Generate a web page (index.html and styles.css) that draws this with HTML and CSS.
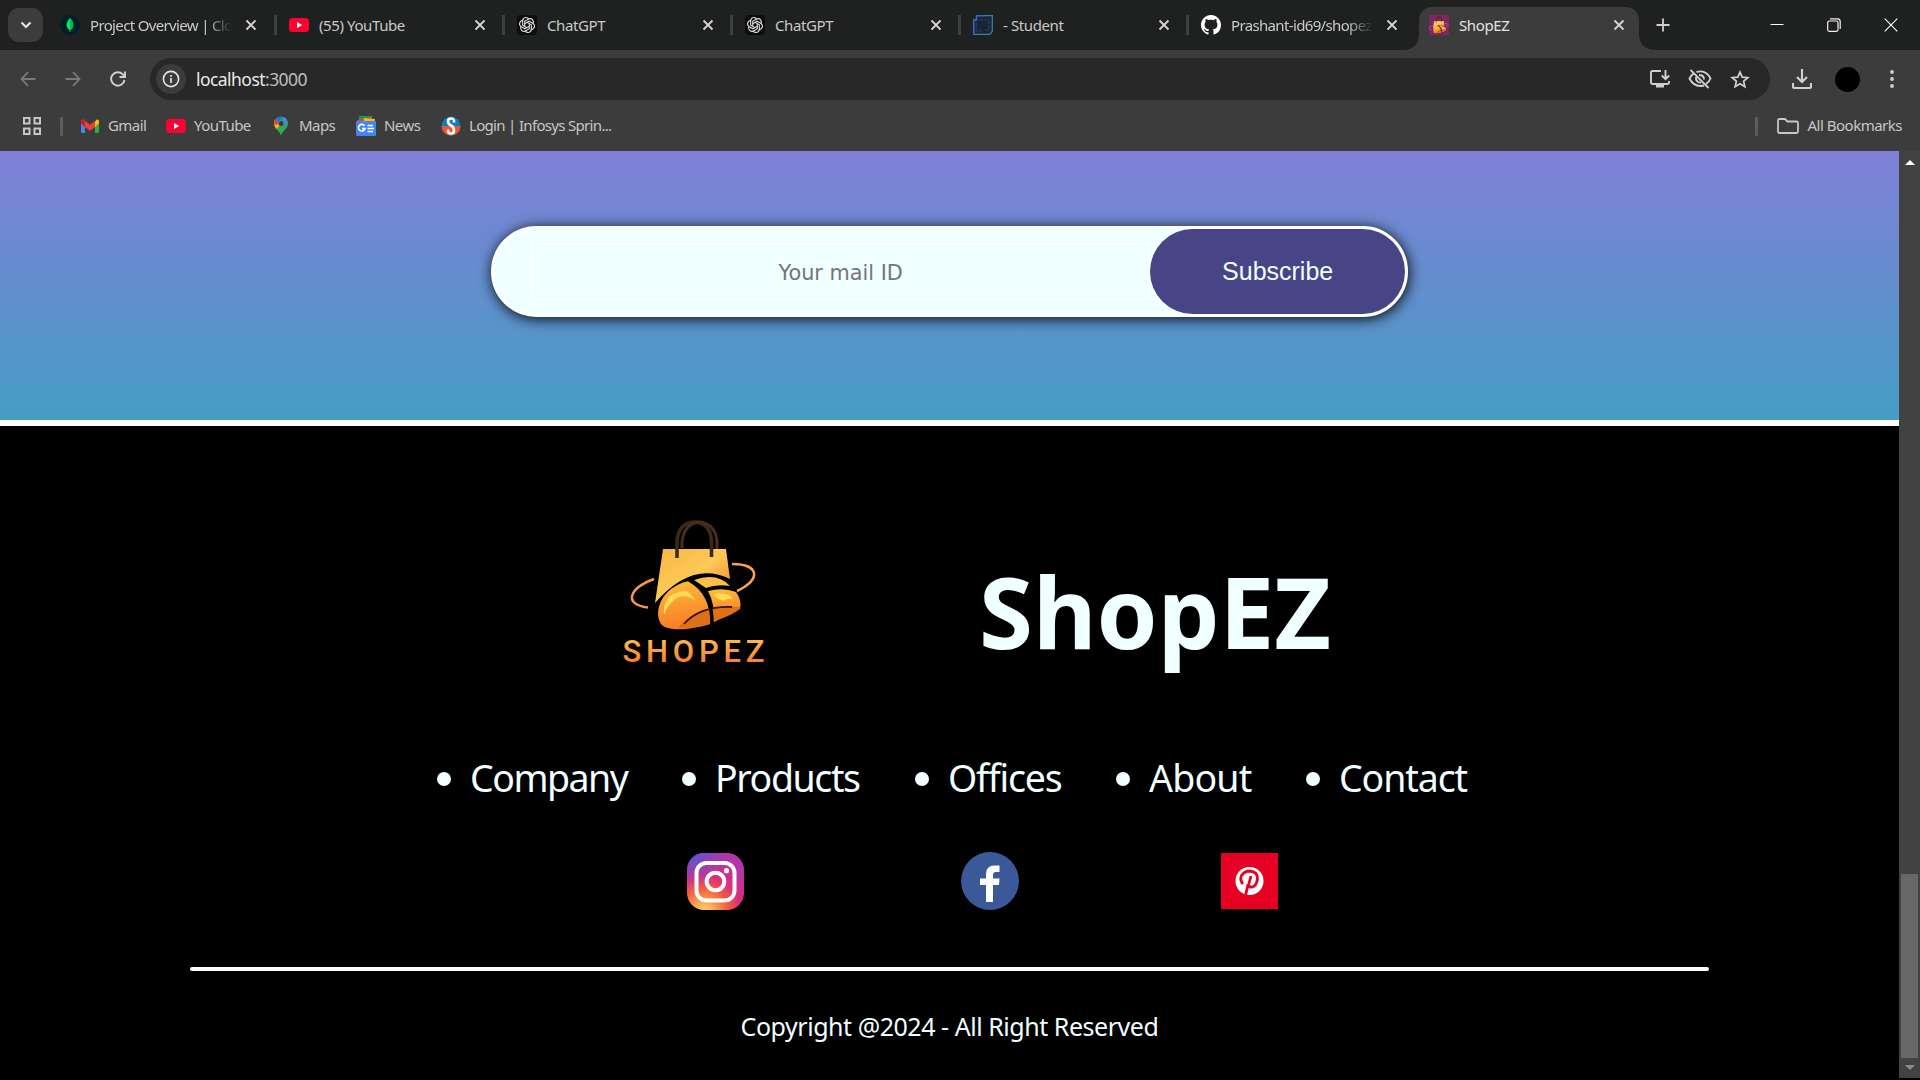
FILE: index.html
```html
<!DOCTYPE html>
<html lang="en">
<head>
<meta charset="utf-8">
<title>ShopEZ</title>
<link rel="stylesheet" href="styles.css">
</head>
<body>
<svg width="0" height="0" class="defs">
  <defs>
    <linearGradient id="gBag" x1="0" y1="0" x2="1" y2="1"><stop offset="0" stop-color="#f9b640"/><stop offset=".5" stop-color="#fdc957"/><stop offset="1" stop-color="#f47a25"/></linearGradient>
    <linearGradient id="gMouse" x1=".3" y1="0" x2=".5" y2="1"><stop offset="0" stop-color="#fdbb3c"/><stop offset="1" stop-color="#f87a24"/></linearGradient>
    <linearGradient id="gWord" x1="0" y1="0" x2="0" y2="1"><stop offset=".15" stop-color="#fbbb50"/><stop offset=".85" stop-color="#f57a35"/></linearGradient>
    <radialGradient id="gInsta" cx=".3" cy="1.05" r="1"><stop offset="0" stop-color="#fdd575"/><stop offset=".15" stop-color="#fcb45a"/><stop offset=".42" stop-color="#f5603c"/><stop offset=".65" stop-color="#d92e7f"/><stop offset="1" stop-color="#b136a8"/></radialGradient>
    <radialGradient id="gInstaBlue" cx=".1" cy="0" r=".6"><stop offset="0" stop-color="#4a5fd8"/><stop offset="1" stop-color="#7a48c8" stop-opacity="0"/></radialGradient>
    <symbol id="x" viewBox="0 0 12 12"><path d="M1.5 1.5l9 9m0-9l-9 9" stroke="currentColor" stroke-width="1.8" fill="none"/></symbol>
    <symbol id="yt" viewBox="0 0 20 20"><rect y="3" width="20" height="14" rx="3.5" fill="#ff0033"/><path d="M8 7l5.200 3L8 13z" fill="#fff"/></symbol>
    <symbol id="gpt" viewBox="0 0 20 20"><rect width="20" height="20" rx="4" fill="#0c0c0c"/><g fill="none" stroke="#d8d8d8" stroke-width="1.150"><path id="petal" d="M7.700 11.300V6.300L11.500 4.100C15 2.500 17.500 6 15.900 9"/><use href="#petal" transform="rotate(60 10 10)"/><use href="#petal" transform="rotate(120 10 10)"/><use href="#petal" transform="rotate(180 10 10)"/><use href="#petal" transform="rotate(240 10 10)"/><use href="#petal" transform="rotate(300 10 10)"/></g></symbol>
    <symbol id="bag" viewBox="0 0 200 180">
      <path d="M63 49H126L130 79Q92 60 55 103Z" fill="url(#gBag)"/>
      <g fill="none" stroke="#3d2815" stroke-width="3.600"><path d="M77 58V42Q78 22 96 22 111 24 111.500 42V57"/><path d="M82 48V42Q84 24 99 22 116 24 117 42V49" stroke="#4a2b20" stroke-width="3"/></g>
      <path d="M54 79C30 88 22 104 48 107.500" fill="none" stroke="#f59a48" stroke-width="2.500"/>
      <path d="M132 64C159 64 162 79 137 91" fill="none" stroke="#f9a44c" stroke-width="2.500"/>
      <path d="M89 81C61 87 53 112 61 124 67 132 91 130 110 124 111 106 105 91 89 81Z" fill="url(#gMouse)"/>
      <path d="M64 115Q62 92 86 91 92 94 96 101 84 92 74 100 66 107 64 115Z" fill="#fedb52"/>
      <path d="M94 80Q117 72 130 86 116 84 106 88Z" fill="#fbc04b"/>
      <path d="M108 91Q123 87 136 92 142 100 140 109L114 122Q115 104 108 91Z" fill="url(#gMouse)"/>
      <path d="M113 94Q128 91 133 99 126 98 124 101 118 100 113 94Z" fill="#fedb52"/>
      <path d="M78 128Q97 103 140 107 139 113 114 121L110 124Q92 129 78 128Z" fill="#e07016"/>
      <path d="M84 124Q100 106 132 107" fill="none" stroke="#351206" stroke-width="1.800"/>
      <path d="M89 80Q113 93 112 125" fill="none" stroke="#000" stroke-width="3.500"/>
    </symbol>
  </defs>
</svg>

<header class="chrome">
  <div class="tabstrip">
    <button class="tab-search"><svg width="12" height="8" viewBox="0 0 12 8"><path d="M1.500 1.500L6 6l4.500-4.500" fill="none" stroke="#e3e3e3" stroke-width="2.200"/></svg></button>
    <div class="tab first"><svg class="fav" viewBox="0 0 20 20"><circle cx="10" cy="10" r="10" fill="#001e2b"/><path d="M10 3Q5.800 8 6.800 11.500 7.700 14 9.600 15V17h.8V15Q12.700 14 13.300 11 13.700 7 10 3Z" fill="#00ed64"/><path d="M10 3V15Q12.700 14 13.300 11 13.700 7 10 3Z" fill="#00b653"/></svg><span class="title fade">Project Overview | Clo</span><svg class="close"><use href="#x"/></svg></div>
    <div class="tab"><svg class="fav"><use href="#yt"/></svg><span class="title">(55) YouTube</span><svg class="close"><use href="#x"/></svg></div>
    <div class="tab"><svg class="fav"><use href="#gpt"/></svg><span class="title">ChatGPT</span><svg class="close"><use href="#x"/></svg></div>
    <div class="tab"><svg class="fav"><use href="#gpt"/></svg><span class="title">ChatGPT</span><svg class="close"><use href="#x"/></svg></div>
    <div class="tab"><svg class="fav" viewBox="0 0 20 20"><path d="M3.500 .7H19.300V16L17 19.300H.7V5H3.500Z" fill="#17243a" stroke="#3a8297" stroke-width="1.300"/><path d="M.7 19V5H3.500V.7H11" fill="none" stroke="#3c63bd" stroke-width="1.300"/><path d="M6 5h10v10h-4M3.500 8v8h7" fill="none" stroke="#23375a" stroke-width="1.600" stroke-dasharray="4 1"/></svg><span class="title">- Student</span><svg class="close"><use href="#x"/></svg></div>
    <div class="tab"><svg class="fav" viewBox="0 0 16 16"><path fill="#fff" d="M8 0C3.580 0 0 3.580 0 8c0 3.540 2.290 6.530 5.470 7.590.4.070.55-.17.55-.38 0-.19-.01-.82-.01-1.490-2.010.37-2.530-.49-2.690-.94-.09-.23-.48-.94-.82-1.130-.28-.15-.68-.52-.01-.53.63-.01 1.080.58 1.230.82.72 1.210 1.870.87 2.330.66.070-.52.28-.87.51-1.070-1.780-.2-3.640-.89-3.640-3.950 0-.87.31-1.590.82-2.150-.08-.2-.36-1.020.08-2.120 0 0 .67-.21 2.200.82.64-.18 1.320-.27 2-.27s1.360.09 2 .27c1.530-1.040 2.200-.82 2.200-.82.44 1.100.16 1.920.08 2.120.51.56.82 1.270.82 2.150 0 3.070-1.870 3.750-3.650 3.950.29.25.54.73.54 1.480 0 1.070-.01 1.930-.01 2.200 0 .21.15.46.55.38A8 8 0 0 0 16 8c0-4.420-3.580-8-8-8Z"/></svg><span class="title fade">Prashant-id69/shopez</span><svg class="close"><use href="#x"/></svg></div>
    <div class="tab active"><svg class="fav shopfav" viewBox="30 18 130 115"><use href="#bag" width="200" height="180"/></svg><span class="title">ShopEZ</span><svg class="close"><use href="#x"/></svg></div>
    <svg class="newtab" width="14" height="14" viewBox="0 0 14 14"><path d="M7 .5v13M.5 7h13" stroke="#d0d0d0" stroke-width="1.800"/></svg>
    <div class="winbtns">
      <svg width="14" height="14" viewBox="0 0 14 14"><path d="M.5 6.500h13" stroke="#fff"/></svg>
      <svg width="14" height="14" viewBox="0 0 14 14" fill="none" stroke="#f0f0f0" stroke-width="1.200"><rect x=".7" y="3" width="10.300" height="10.300" rx="1.500"/><path d="M3 .8h7.500q2.700 0 2.700 2.700V11"/></svg>
      <svg width="14" height="14" viewBox="0 0 14 14"><path d="M.7 .7l12.600 12.600m0-12.600L.7 13.300" stroke="#fff" stroke-width="1.100"/></svg>
    </div>
  </div>

  <div class="toolbar">
    <nav class="navbtns">
      <svg width="16" height="16" viewBox="0 0 16 16" fill="none" stroke="#797979" stroke-width="1.800"><path d="M15.500 8H2M8 1.200L1.500 8 8 14.800"/></svg>
      <svg width="16" height="16" viewBox="0 0 16 16" fill="none" stroke="#797979" stroke-width="1.800"><path d="M.5 8H14M8 1.200L14.500 8 8 14.800"/></svg>
      <svg width="16" height="16" viewBox="0 0 16 16" fill="none" stroke="#d0d0d0" stroke-width="1.900"><path d="M14.500 9A6.700 6.700 0 1 1 12.800 3.400L14.800 5.600M15 .5V6H9.500"/></svg>
    </nav>
    <div class="omnibox">
      <span class="info"><svg width="18" height="18" viewBox="0 0 18 18"><circle cx="9" cy="9" r="7.600" fill="none" stroke="#e3e3e3" stroke-width="1.600"/><path d="M9 8v5M9 5v1.800" stroke="#e3e3e3" stroke-width="1.700"/></svg></span>
      <span class="url">localhost<i>:3000</i></span>
      <svg class="o1" width="20" height="18" viewBox="0 0 20 18" fill="none" stroke="#d0d0d0" stroke-width="1.900"><path d="M11 1H2.500Q1 1 1 2.500V12.500Q1 14 2.500 14H17.500Q19 14 19 12.500V11M15.500 0V9M11.800 5.500l3.700 3.700 3.700-3.700"/><path d="M6 16h8" stroke-width="3"/></svg>
      <svg class="o2" width="24" height="20" viewBox="0 0 24 20" fill="none" stroke="#d0d0d0" stroke-width="1.900"><path d="M8.500 3Q18 .2 22.500 9.500 21 13 18 15M5.500 4.500Q3 6.500 1.500 9.500 6.500 19 16 16.500"/><path d="M11 6q5 0 5 4.500M8 8q-.5 5.500 5 5.800"/><path d="M2.500 .8L20.500 19"/></svg>
      <svg class="o3" width="20" height="19" viewBox="0 0 20 19" fill="none" stroke="#d0d0d0" stroke-width="1.700"><path d="M10 2.200L12.200 7.100 17.800 7.600 13.600 11.300 14.900 16.700 10 13.800 5.100 16.700 6.400 11.300 2.200 7.600 7.800 7.100Z"/></svg>
    </div>
    <svg class="dl" width="20" height="20" viewBox="0 0 20 20" fill="none" stroke="#d0d0d0" stroke-width="2.100"><path d="M10 0V13M5 8l5 5 5-5M1 14V17.500Q1 19 2.500 19H17.500Q19 19 19 17.500V14"/></svg>
    <span class="avatar"></span>
    <svg class="more" width="4" height="18" viewBox="0 0 4 18" fill="#d0d0d0"><circle cx="2" cy="2" r="1.900"/><circle cx="2" cy="9" r="1.900"/><circle cx="2" cy="16" r="1.900"/></svg>
  </div>

  <div class="bookmarks">
    <svg class="apps" width="18" height="18" viewBox="0 0 18 18" fill="none" stroke="#c7c7c7" stroke-width="2"><path d="M1 1h5.500v5.500H1zM11.500 1H17v5.500h-5.500zM1 11.500h5.500V17H1zM11.500 11.500H17V17h-5.500z"/></svg>
    <span class="sep"></span>
    <span class="bm gmail"><svg width="20" height="20" viewBox="0 0 20 20"><path d="M1 5v10.500q0 1.500 1.500 1.500H5V8z" fill="#4285f4"/><path d="M19 5v10.500q0 1.500-1.500 1.500H15V8z" fill="#34a853"/><path d="M15 5.500l1.500-1.700Q19 3 19 5.500V7.500L15 11z" fill="#fbbc04"/><path d="M1 7.500V5.500Q1 3 3.500 3.500L10 8.700 15 5v6l-5 3.800L5 11z" fill="#ea4335"/><path d="M1 7.500V5.500Q1 3 3.500 3.500L5 5v6z" fill="#c5221f"/></svg>Gmail</span>
    <span class="bm youtube"><svg width="20" height="20"><use href="#yt"/></svg>YouTube</span>
    <span class="bm maps"><svg width="20" height="20" viewBox="0 0 20 20"><path d="M10 .5a7 7 0 0 1 6.500 9.500C15.500 13 11.500 15 10 19.500 8.500 15 3 12 3 7.500A7 7 0 0 1 10 .5Z" fill="#34a853"/><path d="M3 7q.2 3.500 2.500 6l6-7L5 3Q3 5 3 7Z" fill="#fbbc04"/><path d="M4.700 3L8 6 5.500 9.200 3 7.500Q3 5 4.700 3Z" fill="#ea4335"/><path d="M4.700 3A7 7 0 0 1 12.500 1L7.500 6.200z" fill="#1a73e8"/><path d="M12.500 1q3.500 1.500 4.300 5L11 10.500 9 8 13 3Z" fill="#4285f4"/><circle cx="10" cy="7.500" r="2.500" fill="#3c3c3c"/></svg>Maps</span>
    <span class="bm news"><svg width="20" height="20" viewBox="0 0 20 20"><path d="M3 0h13v6H3z" fill="#0c9d58"/><path d="M1 4l14-3 2 6H2z" fill="#ea4335"/><path d="M8 2l11 1-1 5H8z" fill="#fbbc04"/><rect y="5" width="20" height="15" rx="1" fill="#4285f4"/><path d="M8.500 9.800A3.300 3.300 0 1 0 9 12.500H6M11.500 9.500H17M11.500 12.500H18M11.500 15.500H17" fill="none" stroke="#fff" stroke-width="1.600"/></svg>News</span>
    <span class="bm login"><svg width="20" height="20" viewBox="0 0 20 20"><circle cx="10" cy="10" r="9.500" fill="#0b7ec4"/><path d="M.5 10a9.500 9.500 0 0 0 19 0z" fill="#f0542a"/><path d="M13 6.500V5Q13 2.500 10 2.500 7 2.500 7 5.500 7 8 10 9.500 13 11 13 14.500 13 17.500 10 17.500 7 17.500 7 15V13.500" fill="none" stroke="#fff" stroke-width="2.600"/></svg>Login | Infosys Sprin...</span>
    <span class="bm all"><span class="sep"></span><svg width="22" height="16" viewBox="0 0 22 16"><path d="M1 13.500V2.500Q1 1 2.500 1H8l2.500 2.500h9Q21 3.500 21 5v8.500q0 1.500-1.500 1.500h-17Q1 15 1 13.500z" fill="none" stroke="#c7c7c7" stroke-width="1.800"/></svg>All Bookmarks</span>
  </div>
</header>

<div class="viewport">
  <main class="page">
    <section class="newsletter">
      <form class="mailbox">
        <input class="mail" type="text" placeholder="Your mail ID">
        <button class="subscribe" type="button">Subscribe</button>
      </form>
    </section>
    <footer class="footer">
      <div class="brand">
        <svg class="logo" width="200" height="180" viewBox="0 0 200 180"><use href="#bag" width="200" height="180"/><text x="22.500" y="162" textLength="142" font-family="Roboto, sans-serif" font-size="31" font-weight="500" fill="url(#gWord)">SHOPEZ</text></svg>
        <h1 class="name"><svg width="364" height="140"><text x="0" y="112" textLength="352" lengthAdjust="spacingAndGlyphs">ShopEZ</text></svg></h1>
      </div>
      <ul class="links">
        <li><span class="w1">Company</span></li><li><span class="w2">Products</span></li><li><span class="w3">Offices</span></li><li><span class="w4">About</span></li><li><span class="w5">Contact</span></li>
      </ul>
      <div class="social">
        <svg width="57" height="57" viewBox="0 0 57 57"><rect width="57" height="57" rx="17" fill="url(#gInsta)"/><rect width="57" height="57" rx="17" fill="url(#gInstaBlue)"/><g fill="none" stroke="#fff" stroke-width="4"><rect x="9.500" y="10" width="38" height="37.500" rx="10"/><circle cx="28.500" cy="28.500" r="8.800"/></g><circle cx="39.500" cy="17.700" r="2.600" fill="#fff"/></svg>
        <svg width="58" height="58" viewBox="0 0 58 58"><circle cx="29" cy="29" r="29" fill="#3b5998"/><path d="M25 50V33H19V26.500h6V22q0-8.500 8.500-8.500H38.500V20H35q-3 0-3 3.200v3.300h6.500L38 33H32v17z" fill="#fff"/></svg>
        <svg width="57" height="56" viewBox="0 0 57 56"><path d="M0 0h57v56H0z" fill="#e60023"/><circle cx="28.500" cy="28" r="14" fill="#fff"/><path d="M22 31Q18.500 27 20.500 22.500 23.500 18 29 18 37 19 36.500 26 35 34.500 30 34 27.500 34 27 31.500L24.500 42.500" fill="none" stroke="#e60023" stroke-width="2.800"/><path d="M30 23L27 34" stroke="#e60023" stroke-width="2.800"/></svg>
      </div>
      <hr class="rule">
      <p class="copy"><span>Copyright @2024 - All Right Reserved</span></p>
    </footer>
  </main>
  <aside class="scrollbar"><i class="up"></i><i class="thumb"></i><i class="down"></i></aside>
</div>
</body>
</html>
```
FILE: styles.css
```css
* { box-sizing: border-box; }
body { margin: 0; width: 1920px; height: 1080px; overflow: hidden; background: #000; font-family: "Noto Sans", "Open Sans", sans-serif; }
svg { flex: none; display: block; }
.defs { position: absolute; }

.chrome { background: #3c3c3c; height: 151px; }
.tabstrip { display: flex; align-items: center; height: 50px; background: #1f2120; padding-left: 8px; }
.tab-search { width: 35px; height: 34px; border: 0; border-radius: 11px; background: #3c3c3c; padding: 0; display: flex; align-items: center; justify-content: center; }
.tab { width: 228px; height: 50px; display: flex; align-items: center; padding: 0 16px 0 15px; color: #c9cac9; font-size: 15px; flex: none; background: linear-gradient(#3f4140, #3f4140) no-repeat 0 15px / 3px 20px; }
.tab.first { width: 231px; padding: 0 17px; background: none; }
.fav { width: 20px; height: 20px; margin-right: 10px; }
.title { flex: 1; white-space: nowrap; overflow: hidden; letter-spacing: -.4px; margin-right: 13px; }
.fade { letter-spacing: -.65px; mask-image: linear-gradient(90deg, #000 82%, transparent 100%); }
.close { width: 12px; height: 12px; color: #d4d5d4; }
.tab.active { width: 220px; height: 43px; align-self: flex-end; background: #3c3c3c; border-radius: 13px 13px 0 0; color: #e3e3e3; position: relative; margin-left: 5px; padding: 0 14px 7px 10px; }
.tab.active::before, .tab.active::after { content: ""; position: absolute; bottom: 0; width: 14px; height: 14px; }
.tab.active::before { left: -14px; background: radial-gradient(circle at 0 0, transparent 13.500px, #3c3c3c 14px); }
.tab.active::after { right: -14px; background: radial-gradient(circle at 100% 0, transparent 13.500px, #3c3c3c 14px); }
.shopfav { background: #7e2569; }
.newtab { margin-left: 17px; }
.winbtns { margin-left: auto; display: flex; gap: 43px; padding-right: 22px; }

.toolbar { display: flex; align-items: center; height: 58px; }
.navbtns { display: flex; gap: 29px; padding-left: 20px; width: 150px; }
.omnibox { width: 1620px; height: 42px; border-radius: 21px; background: #282828; display: flex; align-items: center; padding-left: 6px; }
.info { width: 30px; height: 30px; border-radius: 50%; background: #3c3c3c; display: grid; place-items: center; margin-right: 10px; }
.url { font-size: 17.500px; letter-spacing: -.55px; color: #e8e8e8; flex: 1; }
.url i { font-style: normal; color: #bfbfbf; }
.o1 { margin-right: 18px; }
.o2 { margin-right: 18px; }
.o3 { margin-right: 20px; }
.dl { margin-left: 22px; }
.avatar { width: 25px; height: 25px; border-radius: 50%; background: #000; margin-left: 23px; }
.more { margin-left: 30px; }

.bookmarks { display: flex; align-items: center; height: 36px; font-size: 15px; letter-spacing: -.55px; color: #c7c7c7; padding-left: 23px; }
.sep { width: 3px; height: 19px; background: #5c5c5c; border-radius: 1px; }
.apps + .sep { margin: 0 17px 0 19px; }
.bm { display: flex; align-items: center; white-space: nowrap; gap: 8px; line-height: 20px; margin-bottom: 2px; }
.bm svg, .bm .sep { margin-top: 2px; }
.gmail { width: 86px; }
.youtube { width: 105px; }
.maps { width: 85px; }
.news { width: 85px; }
.login { letter-spacing: -.68px; }
.all { margin-left: auto; padding-right: 18px; letter-spacing: -.5px; }
.all .sep { margin-right: 11px; }
.all svg { margin-right: 1px; }

.viewport { display: flex; height: 929px; }
.page { width: 1899px; }
.newsletter { height: 269px; background: linear-gradient(#8080d7, #459dc4); padding: 75px 0 0 491px; }
.mailbox { width: 917px; height: 91px; border: 3px solid #fff; border-radius: 46px; background: azure; box-shadow: 1px 2px 14px #000e; display: flex; align-items: center; padding-left: 37px; }
.mail { width: 620px; height: 57px; border: 2px solid #fff; background: transparent; font: 20.800px "DejaVu Sans", sans-serif; text-align: center; padding: 2px 0 0; }
.mail::placeholder { color: #757575; }
.subscribe { width: 255px; height: 85px; border: 0; border-radius: 43px; background: #474585; color: azure; font: 25px "Liberation Sans", Arial, sans-serif; padding: 0; }

.footer { border-top: 6px solid #fff; background: #000; height: 660px; color: azure; }
.brand { display: flex; height: 308px; padding: 74px 0 0 600px; gap: 178.500px; }
.name { margin: 37px 0 0; font-size: 98px; line-height: 1; }
.name text { fill: azure; font-family: "Noto Sans", sans-serif; font-weight: 700; }
.links { list-style: none; margin: 0; padding: 19px 0 0 437px; display: flex; height: 118px; font-size: 37.500px; line-height: 50px; }
.links li { display: flex; align-items: center; height: 50px; white-space: nowrap; }
.links li::before { content: ""; width: 14px; height: 14px; border-radius: 50%; background: azure; margin: 1px 19px 0 0; }
.w1 { width: 212px; letter-spacing: -1.500px; }
.w2 { width: 200px; letter-spacing: -1.400px; }
.w3 { width: 168px; letter-spacing: -1.200px; }
.w4 { width: 157px; letter-spacing: -.8px; }
.w5 { letter-spacing: -1.100px; }
.social { display: flex; align-items: center; height: 58px; padding-left: 687px; gap: 202px; }
.social svg:first-child { margin-right: 15px; }
.rule { width: 1519px; height: 4px; border: 0; border-radius: 2px; background: #fff; margin: 57px 0 0 190px; }
.copy { margin: 35px 0 0; text-align: center; font-size: 25px; line-height: 40px; letter-spacing: -.46px; }

.scrollbar { width: 21px; height: 927px; background: #424242; display: flex; flex-direction: column; align-items: center; }
.up { border: 5px solid transparent; border-top: 0; border-bottom: 5px solid #fff; margin-top: 9px; }
.thumb { width: 17px; height: 184px; background: #686868; margin-top: 709px; }
.down { border: 5px solid transparent; border-bottom: 0; border-top: 5px solid #8b8b8b; margin-top: 7px; }
```
